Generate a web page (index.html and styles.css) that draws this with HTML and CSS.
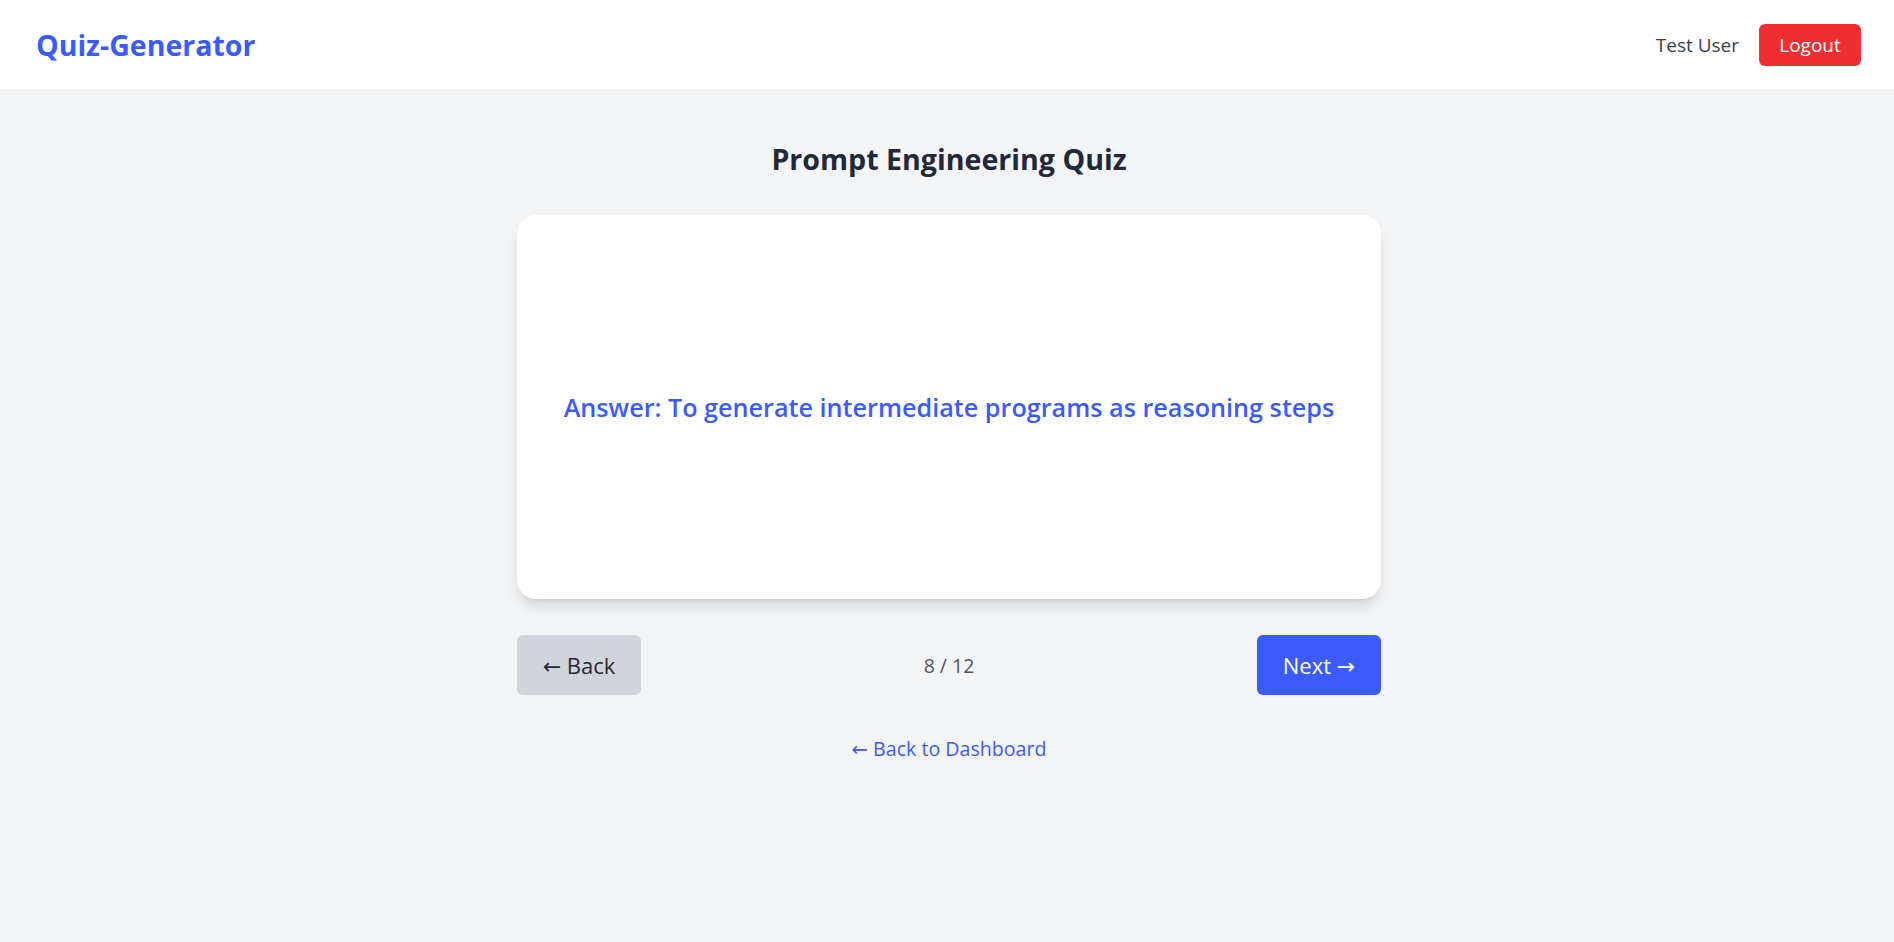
FILE: index.html
```html
<!DOCTYPE html>
<html lang="en">
<head>
<meta charset="utf-8">
<title>Quiz-Generator</title>
<link rel="stylesheet" href="styles.css">
</head>
<body>
<header class="topbar">
  <div class="logo">Quiz-Generator</div>
  <div class="user-area">
    <span class="user-name">Test User</span>
    <button class="btn-logout">Logout</button>
  </div>
</header>
<div class="page">
  <main class="quiz">
    <h1 class="quiz-title">Prompt Engineering Quiz</h1>
    <section class="card">
      <p class="answer">Answer: To generate intermediate programs as reasoning steps</p>
    </section>
    <div class="nav-row">
      <button class="btn btn-back"><span class="arrow">←</span> Back</button>
      <span class="progress">8 / 12</span>
      <button class="btn btn-next">Next <span class="arrow">→</span></button>
    </div>
    <a class="dash-link" href="#"><span class="arrow">←</span> Back to Dashboard</a>
  </main>
</div>
</body>
</html>
```
FILE: styles.css
```css
* { box-sizing: border-box; }
html, body { margin: 0; padding: 0; }
body {
  background: #f3f4f6;
  font-family: "Open Sans", "Noto Sans", sans-serif;
  color: #1f2937;
  min-height: 942px;
}
.topbar {
  height: 89px;
  background: #fff;
  display: flex;
  align-items: center;
  justify-content: space-between;
  padding: 0 33px 0 36px;
}
.logo {
  font-size: 28.5px;
  font-weight: 700;
  color: #3b5bff;
}
.user-area {
  display: flex;
  align-items: center;
  gap: 20px;
}
.user-name {
  font-size: 19px;
  color: #374151;
}
.btn-logout {
  height: 42px;
  width: 102px;
  border: none;
  border-radius: 6px;
  background: #ef2e33;
  color: #fff;
  font-family: inherit;
  font-size: 19px;
}
.page {
  padding-left: 4px;
}
.quiz {
  width: 864px;
  margin: 0 auto;
  display: flex;
  flex-direction: column;
  align-items: center;
  padding-top: 50px;
}
.quiz-title {
  margin: 0 0 36px;
  font-size: 28.6px;
  line-height: 40px;
  font-weight: 700;
  color: #1f2937;
}
.card {
  width: 100%;
  height: 384px;
  background: #fff;
  border-radius: 19px;
  box-shadow: 0 10px 15px -3px rgba(0,0,0,0.12), 0 4px 6px -4px rgba(0,0,0,0.1);
  display: flex;
  align-items: center;
  justify-content: center;
  padding: 0 30px;
}
.answer {
  margin: 0;
  font-size: 25.2px;
  font-weight: 600;
  color: #3b5bff;
  text-align: center;
}
.nav-row {
  width: 100%;
  margin-top: 36px;
  display: flex;
  align-items: center;
  justify-content: space-between;
}
.btn {
  width: 124px;
  height: 60px;
  border: none;
  border-radius: 6px;
  font-family: inherit;
  font-size: 22px;
}
.arrow {
  font-family: "DejaVu Sans", sans-serif;
  font-size: 1em;
}
.btn-back { background: #d1d5db; color: #1f2937; }
.btn-next { background: #3b5bff; color: #fff; }
.progress {
  font-size: 19.5px;
  color: #4b5563;
}
.dash-link {
  margin-top: 40px;
  font-size: 19.6px;
  color: #3b5bff;
  text-decoration: none;
}
```
